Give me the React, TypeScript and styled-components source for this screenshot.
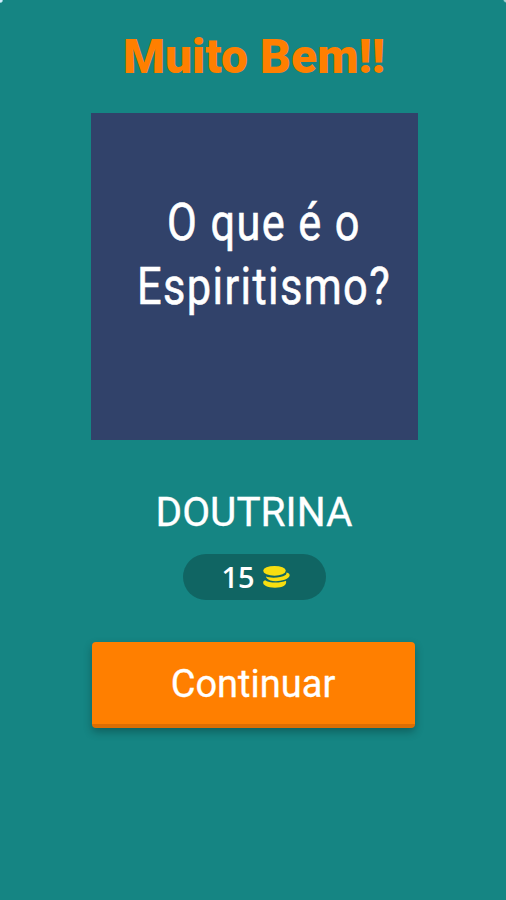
import React from "react";
import styled, { createGlobalStyle } from "styled-components";

const GlobalStyle = createGlobalStyle`
  * { box-sizing: border-box; }
  body { margin: 0; background: #158583; }
`;

const Screen = styled.main`
  width: 506px;
  height: 900px;
  padding-left: 2px;
  display: flex;
  flex-direction: column;
  align-items: center;
  background:
    radial-gradient(circle at 0 0, #d5efff 0 2px, transparent 3.5px),
    radial-gradient(circle at 100% 0, #a5d5d4 0 1.5px, transparent 3px),
    #158583;
  font-family: Roboto, sans-serif;
  color: #fff;
  overflow: hidden;
`;

const Title = styled.h1`
  margin: 27px 0 0;
  font: 900 48px/60px Roboto, sans-serif;
  color: #ff7f00;
  white-space: nowrap;
`;

const Card = styled.section`
  width: 327px;
  height: 327px;
  margin: 26px 0 0 1px;
  padding: 78px 0 0 19px;
  background: #31426a;
`;

const Question = styled.p`
  margin: 0;
  font-size: 52.5px;
  line-height: 63.5px;
  letter-spacing: 1.7px;
  text-align: center;
  white-space: nowrap;
  transform: scaleX(0.825);
  -webkit-text-stroke: 0.6px #fff;
`;

const Answer = styled.h2`
  margin: 48px 0 0;
  font-weight: 400;
  font-size: 40.6px;
  line-height: 48px;
  -webkit-text-stroke: 0.3px #fff;
`;

const Reward = styled.div`
  width: 143px;
  height: 46px;
  margin: 18px 0 0 1px;
  padding-left: 2px;
  display: flex;
  align-items: center;
  justify-content: center;
  gap: 7px;
  border-radius: 23px;
  background: #106563;
`;

const Amount = styled.span`
  font: 600 29px/46px "Open Sans", sans-serif;
`;

const CoinStack = styled.svg`
  width: 28px;
  height: 24px;
  fill: #f7de10;
`;

const ContinueButton = styled.button`
  width: 323px;
  height: 86px;
  margin: 42px 2px 0 0;
  padding: 3px 0 0;
  border: 0;
  border-bottom: 4px solid #db6e04;
  border-radius: 4px;
  background: #ff7f00;
  box-shadow: 0 4px 9px rgba(0, 0, 0, 0.28);
  color: #fff;
  font: 400 38px/79px Roboto, sans-serif;
  -webkit-text-stroke: 0.3px #fff;
`;

export default function App() {
  return (
    <>
      <GlobalStyle />
      <Screen>
        <Title>Muito Bem!!</Title>
        <Card>
          <Question>
            O que é o
            <br />
            Espiritismo?
          </Question>
        </Card>
        <Answer>DOUTRINA</Answer>
        <Reward>
          <Amount>15</Amount>
          <CoinStack viewBox="0 0 28 24" aria-hidden="true">
            <ellipse cx="12.5" cy="5.8" rx="11.3" ry="4.9" />
            <path d="M4 11.6C8 13.4 19 13.2 23.5 10C24.5 9.2 24.5 8.2 24.4 7.4C27 7.8 28 9 27.6 10.8C26.3 15.4 14 17.5 8.2 15.4C5.5 14.4 4 13 4 11.6Z" />
            <path d="M3.2 15.3C6.5 18.2 18.5 18.4 24 15.8C25.2 20.3 20.5 22.7 13 22.7C5.5 22.7 .3 20 1.2 17C1.5 16.1 2.2 15.6 3.2 15.3Z" />
          </CoinStack>
        </Reward>
        <ContinueButton type="button">Continuar</ContinueButton>
      </Screen>
    </>
  );
}
